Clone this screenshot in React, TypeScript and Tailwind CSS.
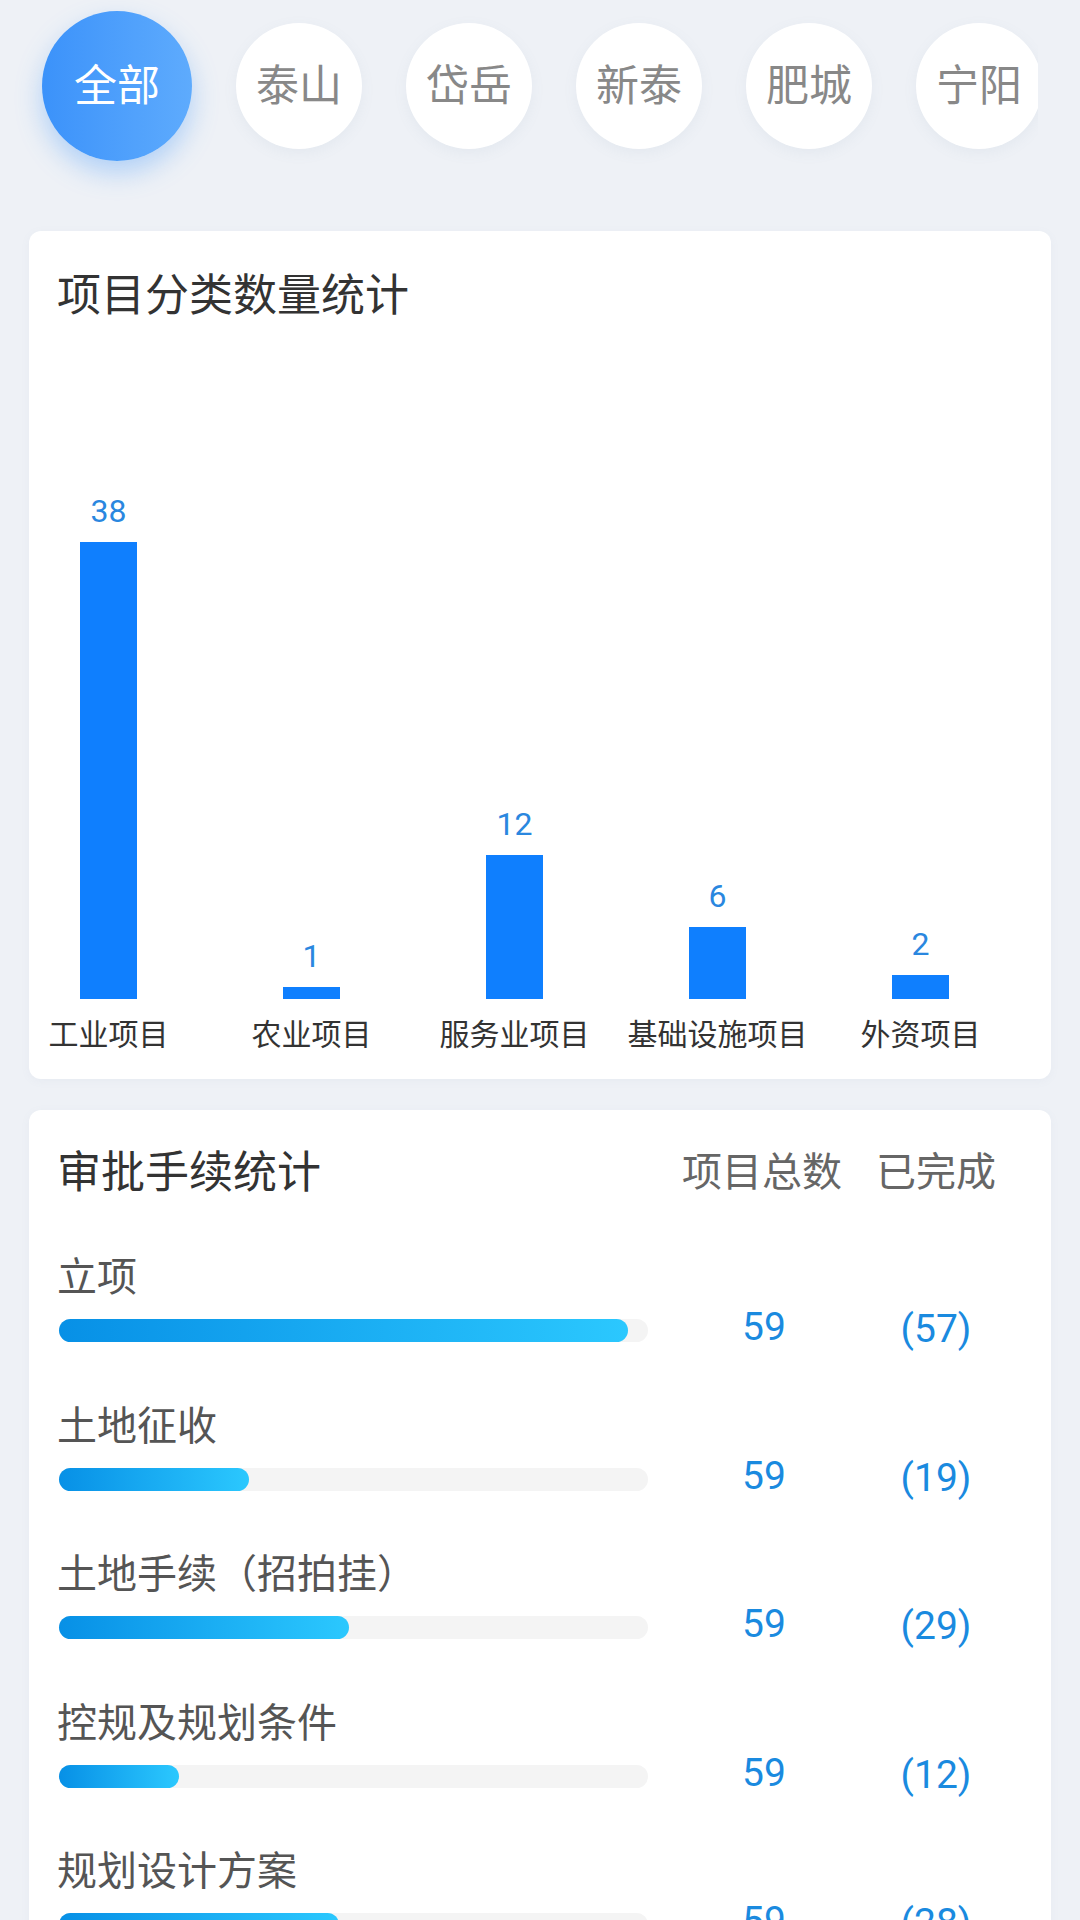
import React from "react";

const FONT = "font-['Roboto','Noto_Sans_CJK_SC',sans-serif]";

const areas = ["全部", "泰山", "岱岳", "新泰", "肥城", "宁阳", "东平"];

const categories = [
  { name: "工业项目", value: 38 },
  { name: "农业项目", value: 1 },
  { name: "服务业项目", value: 12 },
  { name: "基础设施项目", value: 6 },
  { name: "外资项目", value: 2 },
];

const approvals = [
  { name: "立项", total: 59, done: 57 },
  { name: "土地征收", total: 59, done: 19 },
  { name: "土地手续（招拍挂）", total: 59, done: 29 },
  { name: "控规及规划条件", total: 59, done: 12 },
  { name: "规划设计方案", total: 59, done: 28 },
];

// one unit of value = 12.03px of bar height
const UNIT = 12.03;
const TRACK = 589;

function AreaTabs() {
  return (
    <div className="w-[1038px] h-[172px] overflow-x-clip">
      <div className="flex items-center h-full pl-[42px] gap-[44px]">
        {areas.map((a, i) =>
          i === 0 ? (
            <div
              key={a}
              className="shrink-0 w-[150px] h-[150px] rounded-full bg-gradient-to-r from-[#3b92fa] to-[#5eabfd] shadow-[0_12px_26px_rgba(64,150,250,0.35)] flex items-center justify-center text-white text-[43px]"
            >
              {a}
            </div>
          ) : (
            <div
              key={a}
              className="shrink-0 w-[126px] h-[126px] rounded-full bg-white shadow-[0_4px_14px_rgba(120,140,170,0.08)] flex items-center justify-center text-[#888888] text-[43px]"
            >
              {a}
            </div>
          )
        )}
      </div>
    </div>
  );
}

function CategoryChart() {
  return (
    <div className="mx-[29px] mt-[59px] bg-white rounded-[12px] pt-[40px] pb-[24px] shadow-[0_2px_10px_rgba(120,140,170,0.06)]">
      <div className="pl-[28px] text-[44px] leading-[50px] text-[#333333]">项目分类数量统计</div>
      <div className="flex pl-[51px] gap-[146px]">
        {categories.map((c) => (
          <div key={c.name} className="w-[57px] flex flex-col items-center">
            <div className="h-[678px] w-full flex flex-col items-center justify-end">
              <div className="text-[32px] leading-[38px] text-[#2a87df] mb-[12px]">{c.value}</div>
              <div className="w-[57px] bg-[#0f7ffe]" style={{ height: c.value * UNIT }} />
            </div>
            <div className="mt-[16px] text-[30px] leading-[40px] text-[#333333] whitespace-nowrap">{c.name}</div>
          </div>
        ))}
      </div>
    </div>
  );
}

function ApprovalStats() {
  return (
    <div className="mx-[29px] mt-[31px] bg-white rounded-t-[12px] pt-[38px] pl-[30px] pb-[40px] shadow-[0_2px_10px_rgba(120,140,170,0.06)]">
      <div className="flex items-center h-[50px]">
        <div className="w-[589px] -ml-[2px] text-[44px] leading-[50px] text-[#333333]">审批手续统计</div>
        <div className="ml-[34px] w-[164px] text-center text-[40px] text-[#666666]">项目总数</div>
        <div className="ml-[10px] w-[164px] text-center text-[40px] text-[#666666]">已完成</div>
      </div>
      <div className="mt-[57px] flex flex-col gap-[61.5px]">
        {approvals.map((r) => (
          <div key={r.name} className="flex items-end">
            <div className="w-[589px] flex flex-col">
              <div className="-ml-[2px] text-[40px] leading-[46px] text-[#555555] whitespace-nowrap">{r.name}</div>
              <div className="mt-[18px] h-[23px] rounded-full bg-[#f4f4f4]">
                <div
                  className="h-full rounded-full bg-gradient-to-r from-[#0790e6] to-[#2bc8fe]"
                  style={{ width: (r.done / r.total) * TRACK }}
                />
              </div>
            </div>
            <div className="ml-[36px] w-[160px] h-[23px] flex items-center justify-center text-[39px] text-[#1a8adf]">
              <span className="-translate-y-[3px]">{r.total}</span>
            </div>
            <div className="ml-[14px] w-[160px] h-[23px] flex items-center justify-center text-[39px] text-[#1a8adf]">
              <span className="-translate-y-[1px] -translate-x-[2px]">({r.done})</span>
            </div>
          </div>
        ))}
      </div>
    </div>
  );
}

export default function App() {
  return (
    <div className={`w-[1080px] h-[1920px] overflow-hidden bg-[#eef1f6] ${FONT}`}>
      <AreaTabs />
      <CategoryChart />
      <ApprovalStats />
    </div>
  );
}
